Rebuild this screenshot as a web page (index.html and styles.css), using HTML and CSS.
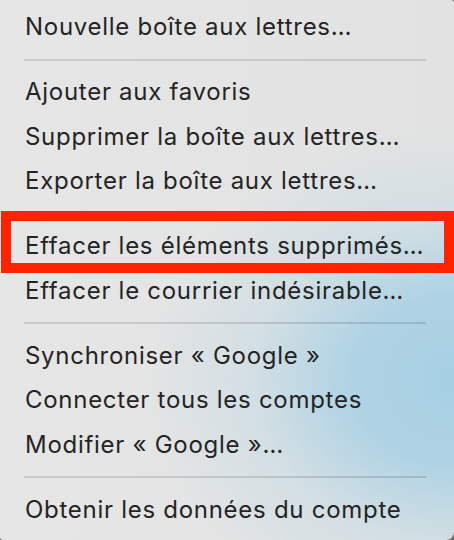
FILE: index.html
```html
<!DOCTYPE html>
<html lang="fr">
<head>
<meta charset="utf-8">
<title>Menu</title>
<link rel="stylesheet" href="styles.css">
</head>
<body>
<div class="menu">
  <div class="item">Nouvelle boîte aux lettres…</div>
  <div class="sep"></div>
  <div class="item">Ajouter aux favoris</div>
  <div class="item">Supprimer la boîte aux lettres…</div>
  <div class="item">Exporter la boîte aux lettres…</div>
  <div class="sep"></div>
  <div class="item">Effacer les éléments supprimés…</div>
  <div class="item">Effacer le courrier indésirable…</div>
  <div class="sep"></div>
  <div class="item">Synchroniser « Google »</div>
  <div class="item">Connecter tous les comptes</div>
  <div class="item">Modifier « Google »…</div>
  <div class="sep"></div>
  <div class="item">Obtenir les données du compte</div>
  <div class="highlight"></div>
</div>
</body>
</html>
```

FILE: styles.css
```css
html, body {
  margin: 0;
  padding: 0;
  background: #6e6e6e;
}

.menu {
  position: relative;
  width: 454px;
  height: 540px;
  box-sizing: border-box;
  padding-top: 5px;
  overflow: hidden;
  border-radius: 0 3px 8px 3px;
  background:
    radial-gradient(ellipse 320px 250px at 460px 380px, #a6cfe3 0%, #b0d3e4 35%, rgba(200, 220, 228, 0.6) 65%, rgba(227, 227, 227, 0) 100%),
    linear-gradient(90deg, #e6e6e6 0%, #e2e2e2 100%);
  font-family: Inter, "Noto Sans", "Liberation Sans", sans-serif;
  font-size: 24px;
  letter-spacing: 0.72px;
  color: #242424;
}

.item {
  height: 44.5px;
  line-height: 44.5px;
  padding-left: 25px;
  white-space: nowrap;
}

.sep {
  height: 20.5px;
  display: flex;
  align-items: center;
  padding: 0 28px 0 24px;
}

.sep::before {
  content: "";
  flex: 1;
  height: 2px;
  background: rgba(0, 0, 0, 0.12);
}

.highlight {
  position: absolute;
  left: 1px;
  top: 211px;
  width: 453px;
  height: 62px;
  box-sizing: border-box;
  border: 10px solid #ff2400;
}
```
